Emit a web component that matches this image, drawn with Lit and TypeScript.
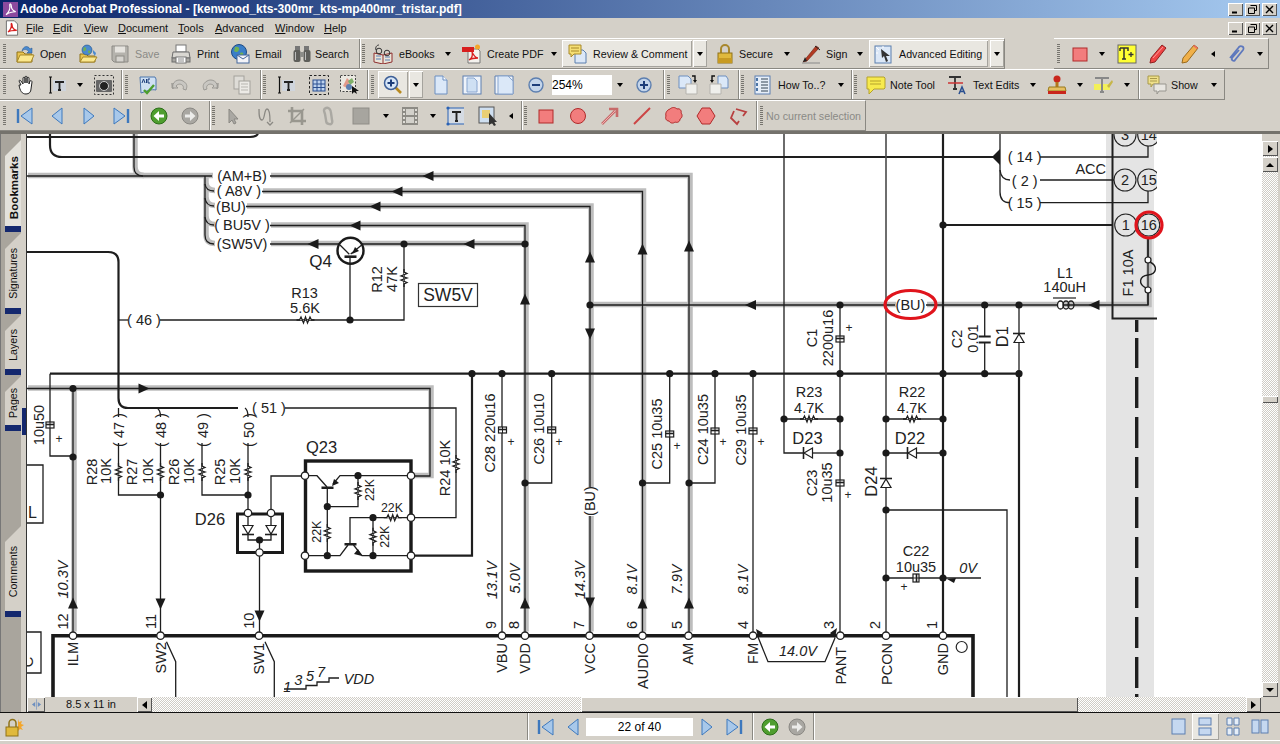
import { LitElement, html, css, svg } from "lit";
import { customElement } from "lit/decorators.js";

// icons, all drawn in a 20x20 box
const I: Record<string, any> = {
  pdf: svg`<path d="M3 1h10l4 4v14H3z" fill="#fff" stroke="#555"/><path d="M5 15c3-2 5-7 4-10 0-1 1-1 1 1 0 4 3 7 6 7-3 0-8 0-11 2z" fill="none" stroke="#d81e1e" stroke-width="1.6"/>`,
  open: svg`<path d="M2 8h6l2 2h7v8H2z" fill="#e9c44f" stroke="#8f7218"/><path d="M2 18l3-7h14l-3 7z" fill="#fbe88e" stroke="#a8892a"/><path d="M7 7c1-5 6-6 8-2l2-1v5h-5l1.5-1.5C12 5 9 5 7 7z" fill="#4a8ad0" stroke="#1c4f8a" stroke-width=".5"/>`,
  open2: svg`<path d="M2 10h6l2 2h7v6H2z" fill="#e9c44f" stroke="#8f7218"/><path d="M2 18l3-5h14l-3 5z" fill="#fbe88e" stroke="#a8892a"/><circle cx="9" cy="6" r="5" fill="#4a8ad0" stroke="#1c4f8a" stroke-width=".6"/><path d="M6 3c2 0 3 2 2 3S6 8 5 6zM10 7c2-1 3 0 2 2-1 1-2 0-2-2z" fill="#6fae55"/><path d="M15 6l3 3-1 3-2-3z" fill="#4a8ad0"/>`,
  save: svg`<path d="M2 2h16v16H4l-2-2z" fill="#b5b3ad" stroke="#8d8b86"/><rect x="5" y="2.5" width="10" height="6" fill="#e6e4df"/><rect x="6" y="12" width="8" height="6" fill="#d6d4cf" stroke="#8d8b86"/>`,
  print: svg`<rect x="5" y="1" width="10" height="7" fill="#fff" stroke="#777"/><path d="M2 8h16l1 6H1z" fill="#d9d7d2" stroke="#6d6d6d"/><rect x="1" y="14" width="18" height="4" fill="#a9a7a2" stroke="#6d6d6d"/><rect x="5" y="13" width="10" height="6" fill="#fff" stroke="#777"/><path d="M7 15h6M7 17h6" stroke="#888"/>`,
  email: svg`<circle cx="9" cy="8" r="7.5" fill="#3a7ec8" stroke="#1c4a85"/><path d="M5 3c3-1 5 1 4 3S6 9 4 7zM10 9c3-1 4 0 3 2-1 1-3 1-3-2z" fill="#6fb055"/><rect x="7" y="11" width="12" height="8" fill="#f3f3f8" stroke="#46689c"/><path d="M7 11l6 4 6-4" fill="none" stroke="#46689c"/>`,
  search: svg`<rect x="3" y="2" width="5" height="5" fill="#777"/><rect x="12" y="2" width="5" height="5" fill="#777"/><rect x="1.5" y="6" width="7" height="12" rx="2" fill="#5e5e5a"/><rect x="11.5" y="6" width="7" height="12" rx="2" fill="#5e5e5a"/><rect x="8" y="8" width="4" height="5" fill="#8c8c88"/><path d="M3.5 8v8M13.5 8v8" stroke="#bbb"/>`,
  ebooks: svg`<path d="M1 9l9 2 9-2v9l-9 2-9-2z" fill="#e9e4d8" stroke="#8f2f2f"/><path d="M10 11v9" stroke="#8f2f2f"/><path d="M3 12h5M3 15h5M12 13h5M12 16h5" stroke="#5a7fb5"/><circle cx="6" cy="7" r="2.8" fill="none" stroke="#333"/><circle cx="14" cy="9" r="2.8" fill="none" stroke="#333"/><path d="M3 6C2 3 4 1 6 1" fill="none" stroke="#333"/>`,
  create: svg`<path d="M6 5h10l2 2v12H6z" fill="#f4f2ee" stroke="#777"/><rect x="0" y="3" width="12" height="5" fill="#d81e1e"/><path d="M7 16c3-2 4-5 3-8 2 4 4 6 6 6-3 0-6 0-9 2z" fill="none" stroke="#d81e1e" stroke-width="1.3"/><circle cx="15.5" cy="3" r="2.5" fill="#f4a62a"/>`,
  review: svg`<path d="M7 6h8l3 3v10H7z" fill="#dce8f7" stroke="#5b7fae"/><path d="M1 1h12v9H6l-3 3v-3H1z" fill="#f5df74" stroke="#a8892a"/><path d="M3 4h8M3 7h8" stroke="#a8892a"/>`,
  lock: svg`<path d="M6 9V5a4 4 0 0 1 8 0v4" fill="none" stroke="#a8872c" stroke-width="2"/><rect x="3" y="9" width="14" height="10" fill="#e0b93c" stroke="#8f7218"/><rect x="3" y="14" width="14" height="5" fill="#c79a22"/>`,
  sign: svg`<path d="M2 18L15 2l3 2L6 17z" fill="#b33a22" stroke="#6d1f10" stroke-width=".6"/><path d="M2 18l2-5 2 4z" fill="#222"/><path d="M1 19h18" stroke="#888"/><path d="M14 2l5 4" stroke="#222"/>`,
  adv: svg`<rect x="2" y="2" width="16" height="17" fill="#dce8f7" stroke="#5b7fae"/><path d="M8 5l1 9 2-2 2 6 2-1-2-5h4z" fill="#333"/><path d="M3 3l3 3M10 2v2M3 9h2" stroke="#fff"/>`,
  rect: svg`<rect x="3" y="4" width="14" height="13" fill="#f27d7d" stroke="#b02a2a"/>`,
  tplus: svg`<rect x="1" y="1" width="18" height="18" fill="#ffff33" stroke="#666"/><path d="M3 4h8v3M7 4v11M5 15h4M3 7V4" fill="none" stroke="#333" stroke-width="1.5"/><path d="M14 8v5M11.5 10.5h5" stroke="#333" stroke-width="1.3"/>`,
  pen: svg`<path d="M3 14L14 1l4 3L7 18l-5 1z" fill="#e44" stroke="#8f2020"/><path d="M5 14l10-11" stroke="#f99"/>`,
  pen2: svg`<path d="M3 14L14 1l4 3L7 18l-5 1z" fill="#f0b04a" stroke="#9a6a1c"/><path d="M13 2l4 3 1-1-4-3z" fill="#e66"/>`,
  clip: svg`<path d="M3 14L12 3c2-2 6 0 4 3L8 16c-1 2-4 0-3-2l7-8" fill="none" stroke="#5e78bd" stroke-width="1.8"/>`,
  hand: svg`<path d="M5 10L3 6c0-1 1-1 2 0l2 3V3c0-1 2-1 2 0v5V2c0-1 2-1 2 0v6V3c0-1 2-1 2 0v6l1-3c1-1 2 0 2 1l-1 7c0 3-2 5-5 5-4 0-6-3-7-9z" fill="#fff" stroke="#222"/>`,
  selT: svg`<path d="M1 2h3M1 18h3M2.5 2v16" stroke="#111" stroke-width="1.2"/><rect x="5" y="5" width="13" height="11" fill="#cfd5dd"/><path d="M7 7h9M11.5 7v8M10 15h3" stroke="#222" stroke-width="1.8" fill="none"/>`,
  cam: svg`<rect x=".5" y=".5" width="19" height="19" fill="none" stroke="#333" stroke-dasharray="2 2"/><rect x="2" y="5" width="16" height="12" rx="1" fill="#666"/><circle cx="10" cy="11" r="4.5" fill="#222" stroke="#ccc"/>`,
  abc: svg`<path d="M2 2h15l1 2v11c-5-1-9 1-15 3z" fill="#cfe0f3" stroke="#4d76ad"/><path d="M6 15l3 3 7-8" fill="none" stroke="#4d9e2e" stroke-width="2.4"/><path d="M4 8l1.5-4L7 8M8.5 4v4M12 4h-2v4h2" fill="none" stroke="#1c3d7a"/>`,
  undo: svg`<path d="M4 14C2 7 9 3 14 6s4 6 3 9l-3-1c2-4-4-7-7-3l2 2H3V8z" fill="#c9c7c2" stroke="#9c9a95"/>`,
  redo: svg`<path d="M16 14C18 7 11 3 6 6s-4 6-3 9l3-1c-2-4 4-7 7-3l-2 2h6V8z" fill="#c9c7c2" stroke="#9c9a95"/>`,
  copy: svg`<rect x="2" y="1" width="10" height="13" fill="#dedcd7" stroke="#a3a19c"/><rect x="7" y="6" width="11" height="13" fill="#eceae6" stroke="#a3a19c"/><path d="M9 9h7M9 12h7M9 15h7" stroke="#b7b5b0"/>`,
  table: svg`<rect x=".5" y=".5" width="19" height="19" fill="none" stroke="#222" stroke-dasharray="2.5 2"/><rect x="4" y="5" width="12" height="11" fill="#bcd2ee" stroke="#2a4f90"/><path d="M4 9h12M4 12.5h12M8 5v11M12 5v11" stroke="#2a4f90"/>`,
  imgsel: svg`<rect x=".5" y=".5" width="15" height="16" fill="#ece9e2" stroke="#444" stroke-dasharray="2 1.5"/><path d="M3 11l4-8 3 3-3 7z" fill="#e39a8a"/><path d="M8 6l4-3 2 4-4 3z" fill="#7fb06a"/><circle cx="9" cy="12" r="3" fill="#5d7fb0"/><path d="M12 11v8l2-2 3 2-1-3h3z" fill="#111"/>`,
  zoom: svg`<path d="M11 11l7 7" stroke="#b88a20" stroke-width="2.6"/><circle cx="8" cy="8" r="6.5" fill="#d7e6f7" stroke="#3d5f97" stroke-width="1.5"/><path d="M4.5 8h7M8 4.5v7" stroke="#1c3d7a" stroke-width="2"/>`,
  page: svg`<path d="M4 1h8l4 4v14H4z" fill="#dbe8f8" stroke="#6d8fc0"/><path d="M12 1v4h4" fill="#fff" stroke="#6d8fc0"/>`,
  page2: svg`<rect x="1" y="1" width="18" height="18" fill="#eef3fa" stroke="#5d7fb0"/><path d="M5 3h7l3 3v11H5z" fill="#cfe0f3" stroke="#8aa6cf"/>`,
  page3: svg`<path d="M1 1h18v18H1z" fill="#eef3fa" stroke="#5d7fb0"/><path d="M4 1h10l5 5v13H4z" fill="#dbe8f8" stroke="#8aa6cf"/>`,
  minus: svg`<circle cx="10" cy="10" r="7" fill="#c3d4ea" stroke="#5d7fb0" stroke-width="1.4"/><path d="M6 10h8" stroke="#1c3d7a" stroke-width="2"/>`,
  plus: svg`<circle cx="10" cy="10" r="7" fill="#c3d4ea" stroke="#5d7fb0" stroke-width="1.4"/><path d="M6 10h8M10 6v8" stroke="#1c3d7a" stroke-width="2"/>`,
  rot1: svg`<path d="M1 1h9l3 3v9H1z" fill="#dbe8f8" stroke="#6d8fc0"/><path d="M8 9h11v10H8z" fill="#efefec" stroke="#b5b3ae"/><path d="M14 1h3v5" fill="none" stroke="#111" stroke-width="1.4"/><path d="M15 5l2 3 2-3z" fill="#111"/>`,
  rot2: svg`<path d="M9 1h8l2 3v9H9z" fill="#dbe8f8" stroke="#6d8fc0"/><path d="M1 9h11v10H1z" fill="#efefec" stroke="#b5b3ae"/><path d="M6 1H3v5" fill="none" stroke="#111" stroke-width="1.4"/><path d="M1 5l2 3 2-3z" fill="#111"/>`,
  howto: svg`<rect x="2" y="1" width="15" height="18" fill="#e6eef8" stroke="#5d7fb0"/><path d="M8 4h7M8 7h7M8 10h7M8 13h7M8 16h7" stroke="#345"/><path d="M4 3v3M4 8v3M4 13v3" stroke="#1c4f8a" stroke-width="1.5"/>`,
  note: svg`<path d="M1 2h17l1 1v10l-1 1H8l-5 5v-5H1z" fill="#f7ea4d" stroke="#b5a22c"/><path d="M4 6h11M4 9h11" stroke="#b5a22c"/>`,
  edits: svg`<path d="M1 2h12M7 2v12M5 14h4" stroke="#333" stroke-width="1.8" fill="none"/><path d="M0 8h15" stroke="#c33" stroke-width="1.5"/><path d="M11 19l3-7 3 7M12.5 16.5h3" stroke="#2a4f90" stroke-width="1.5" fill="none"/>`,
  stamp: svg`<circle cx="10" cy="4" r="3.5" fill="#c9261c"/><rect x="8.5" y="7" width="3" height="5" fill="#b3761c"/><path d="M2 12h16l1 4H1z" fill="#e6bf62" stroke="#9a7b1c"/><rect x="1" y="16" width="18" height="3" fill="#c9261c"/>`,
  hilite: svg`<rect x="0" y="9" width="16" height="6" fill="#f3f05a"/><path d="M1 3h14M8 3v14M6 17h4" stroke="#888" stroke-width="2" fill="none"/><path d="M13 11l5-6 1 2-4 6z" fill="#c7b64a"/>`,
  show: svg`<path d="M1 1h11v8H6l-2 3V9H1z" fill="#efe08a" stroke="#a8994a"/><path d="M7 9h12v7h-7l-2 3v-3H7z" fill="#e8e6e1" stroke="#98968f"/><path d="M3 3.5h7M3 6h7" stroke="#a8994a"/>`,
  first: svg`<path d="M3 3v14" stroke="#3d78bd" stroke-width="2.4"/><path d="M17 2v16L6 10z" fill="#a8c8ea" stroke="#3d78bd"/>`,
  prev: svg`<path d="M15 2v16L5 10z" fill="#a8c8ea" stroke="#3d78bd"/>`,
  next: svg`<path d="M5 2v16l10-8z" fill="#a8c8ea" stroke="#3d78bd"/>`,
  last: svg`<path d="M17 3v14" stroke="#3d78bd" stroke-width="2.4"/><path d="M3 2v16l11-8z" fill="#a8c8ea" stroke="#3d78bd"/>`,
  back: svg`<circle cx="10" cy="10" r="8" fill="#4f9e2f" stroke="#2c6e1a"/><path d="M15 8.5h-5V5l-5.5 5 5.5 5v-3.5h5z" fill="#fff"/>`,
  fwd: svg`<circle cx="10" cy="10" r="8" fill="#a9a7a2" stroke="#8a8883"/><path d="M5 8.5h5V5l5.5 5-5.500 5v-3.5H5z" fill="#ececea"/>`,
  sel: svg`<path d="M5 3v14l3-3 2 4 2-1-2-4h4z" fill="#aaa8a3" stroke="#8a8883"/>`,
  tool: svg`<path d="M3 3c0 5 0 11 3 11s2-11 5-11 3 8 3 13M11 16l3 3 3-3" fill="none" stroke="#8a8883" stroke-width="1.3"/>`,
  crop: svg`<path d="M5 1v14h14M1 5h14v14" fill="none" stroke="#99978f" stroke-width="2.6"/><path d="M3 17L17 3" stroke="#99978f" stroke-width="1.4"/>`,
  link: svg`<path d="M7 2c3-1 5 2 5 5l1 7c1 3-1 5-3 4-2 0-3-2-3-4L6 8C5 5 4 3 7 2z" fill="none" stroke="#aaa8a2" stroke-width="2.4"/>`,
  square: svg`<rect x="2" y="2" width="16" height="16" fill="#a7a59f" stroke="#8f8d87"/>`,
  film: svg`<rect x="2" y="1" width="16" height="18" fill="#8d8b85"/><rect x="6" y="3" width="8" height="6" fill="#d3d1cb"/><rect x="6" y="11" width="8" height="6" fill="#d3d1cb"/><path d="M4 3v14M16 3v14" stroke="#dedcd6" stroke-width="2" stroke-dasharray="2 2"/>`,
  tframe: svg`<rect x="2" y="2" width="16" height="16" fill="#d5dbe3"/><path d="M2 2v16M2 2h16M2 18h16" stroke="#2a62b5"/><circle cx="2" cy="2" r="1.6" fill="#2a62b5"/><circle cx="2" cy="18" r="1.6" fill="#2a62b5"/><path d="M6 6h9M10.5 6v9M9 15h3" stroke="#222" stroke-width="1.9" fill="none"/>`,
  imgcur: svg`<rect x="1" y="1" width="15" height="16" fill="#cfdff0" stroke="#555"/><rect x="4" y="4" width="8" height="8" fill="#e9cf75"/><path d="M11 7v12l3-2 2 3 2-1-2-3h3z" fill="#333"/>`,
  circle: svg`<circle cx="10" cy="10" r="7.5" fill="#f27d7d" stroke="#b02a2a"/>`,
  arrowr: svg`<path d="M2 18L15 5M9 3h8v8" fill="none" stroke="#c76a6a" stroke-width="2.6"/><path d="M2 18L15 5" stroke="#efb0b0"/>`,
  liner: svg`<path d="M2 18L18 2" stroke="#c44" stroke-width="2"/>`,
  cloud: svg`<path d="M6 3c2-2 5-2 7 0 3-1 5 2 4 4 2 2 1 5-1 6 0 3-3 4-5 3-2 2-5 1-6-1-3 0-4-3-3-5-1-3 1-6 4-7z" fill="#f27d7d" stroke="#b02a2a"/>`,
  hex: svg`<path d="M6 2h8l5 8-5 8H6l-5-8z" fill="#f27d7d" stroke="#b02a2a"/>`,
  poly: svg`<path d="M8 3l10 3-3 4M6 5L3 12l6 6 2-3" fill="none" stroke="#b84040" stroke-width="1.8"/>`,
  lockstar: svg`<path d="M14 2l1 3 3-1-1 3 3 1-3 2 2 3-3-1-2 2z" fill="#f4a62a"/><path d="M5 10V6a3.5 3.5 0 0 1 7 0v4" fill="none" stroke="#8f7218" stroke-width="1.5"/><rect x="2" y="10" width="12" height="9" fill="#e0b93c" stroke="#8f7218"/>`,
  v1: svg`<rect x="3" y="2" width="13" height="15" fill="#c5d8f0" stroke="#5d7fb0"/>`,
  v2: svg`<rect x="4" y="1" width="12" height="7" fill="#c5d8f0" stroke="#5d7fb0"/><rect x="4" y="11" width="12" height="7" fill="#c5d8f0" stroke="#5d7fb0"/>`,
  v3: svg`<path d="M4 1h5v7H4zM11 1h5v7h-5zM4 11h5v7H4zM11 11h5v7h-5z" fill="#e6eef8" stroke="#5d7fb0"/>`,
  v4: svg`<rect x="2" y="3" width="7" height="13" fill="#c5d8f0" stroke="#5d7fb0"/><rect x="11" y="3" width="7" height="13" fill="#c5d8f0" stroke="#5d7fb0"/>`,
};

type Item = { x: number; w: number; c: any };
const ic = (x: number, n: string, w = 20) => ({ x, w, c: html`<svg class="ic" viewBox="0 0 20 20" width=${w} height="20">${I[n]}</svg>` });
const tx = (x: number, t: string, w: number, off = false) => ({ x, w, c: html`<span class="lb ${off ? "off" : ""}">${t}</span>` });
const dn = (x: number) => ({ x: x - 3, w: 7, c: html`<i class="dn"></i>` });
const lf = (x: number) => ({ x: x - 2, w: 5, c: html`<i class="lf"></i>` });
const sep = (x: number) => ({ x, w: 2, c: html`<i class="sep"></i>` });
const grip = (x: number) => ({ x, w: 3, c: html`<i class="grip"></i>` });
const box = (x: number, w: number, n: string | null, t = "", sx = 4, tw = 0) => ({
  x, w,
  c: html`<span class="sel" style="padding-left:${sx}px">${n ? html`<svg class="ic" viewBox="0 0 20 20" width="20" height="20">${I[n]}</svg>` : ""}${t ? html`<span class="lb" style="margin-left:${tw}px">${t}</span>` : ""}</span>`,
});
const ddbox = (x: number, w: number) => ({ x, w, c: html`<span class="sel dd"><i class="dn"></i></span>` });

// places the items left to right; the gaps come from the x values
const place = (items: Item[], start: number) => {
  let at = start;
  return items.map((it) => {
    const gap = it.x - at;
    at = it.x + it.w;
    return html`<span class="cell" style="margin-left:${gap}px;width:${it.w}px">${it.c}</span>`;
  });
};

const row1a: Item[] = [grip(3), ic(15, "open"), tx(40, "Open", 26), ic(78, "open2"), ic(110, "save"), tx(135, "Save", 25, true), ic(171, "print"), tx(197, "Print", 22), ic(230, "email"), tx(255, "Email", 26), ic(292, "search"), tx(315, "Search", 36), sep(359), grip(362), ic(373, "ebooks"), tx(399, "eBooks", 36), dn(448), ic(462, "create"), tx(487, "Create PDF", 54), dn(554), box(562, 130, "review", "Review & Comment", 6, 5), ddbox(693, 14), ic(715, "lock"), tx(739, "Secure", 36), dn(787), ic(801, "sign"), tx(826, "Sign", 22), dn(860), box(869, 119, "adv", "Advanced Editing", 4, 6), ddbox(990, 14)];
const row1b: Item[] = [grip(1057), ic(1070, "rect"), dn(1102), ic(1117, "tplus"), ic(1148, "pen"), ic(1180, "pen2"), lf(1213), ic(1227, "clip"), dn(1260)];
const row2: Item[] = [grip(3), ic(16, "hand"), ic(48, "selT"), dn(80), ic(94, "cam"), sep(121), grip(125), ic(138, "abc"), ic(169, "undo"), ic(201, "redo"), ic(232, "copy"), sep(260), grip(263), ic(277, "selT"), ic(309, "table"), ic(340, "imgsel"), sep(367), grip(371), box(378, 30, "zoom", "", 5), ddbox(409, 14), ic(431, "page"), ic(462, "page2"), ic(494, "page3"), ic(526, "minus"), { x: 552, w: 60, c: html`<span class="field">254%</span>` }, dn(620), ic(634, "plus"), sep(663), grip(667), ic(678, "rot1"), ic(709, "rot2"), sep(738), grip(741), ic(753, "howto"), tx(778, "How To..?", 50), dn(841), sep(851), grip(854), ic(866, "note"), tx(890, "Note Tool", 46), ic(948, "edits"), tx(973, "Text Edits", 48), dn(1033), ic(1047, "stamp"), dn(1080), ic(1094, "hilite"), dn(1127), sep(1138), ic(1147, "show"), tx(1171, "Show", 30), dn(1214)];
const row3: Item[] = [grip(3), ic(15, "first"), ic(47, "prev"), ic(79, "next"), ic(111, "last"), sep(140), ic(149, "back"), ic(180, "fwd"), sep(209), grip(212), ic(224, "sel"), ic(256, "tool"), ic(287, "crop"), ic(319, "link"), ic(351, "square"), dn(386), ic(400, "film"), dn(433), ic(446, "tframe"), ic(478, "imgcur"), lf(511), sep(521), grip(524), ic(536, "rect"), ic(568, "circle"), ic(600, "arrowr"), ic(632, "liner"), ic(664, "cloud"), ic(696, "hex"), ic(728, "poly"), sep(756), grip(760), tx(766, "No current selection", 96, true)];
const statusItems: Item[] = [ic(4, "lockstar"), sep(527), ic(536, "first"), ic(563, "prev"), { x: 586, w: 107, c: html`<span class="field mid">22 of 40</span>` }, ic(697, "next"), ic(724, "last"), sep(752), ic(760, "back"), ic(787, "fwd"), sep(813), ic(1169, "v1"), box(1192, 27, "v2", "", 3), ic(1223, "v3"), ic(1250, "v4")];

// schematic helpers, everything in page coordinates
const INK = "#1e1e1e";
const vt = (x: number, y: number, t: string, size = 14.5, italic = false) => svg`<text transform="rotate(-90 ${x} ${y})" x=${x} y=${y} text-anchor="middle" font-size=${size} font-style=${italic ? "italic" : "normal"}>${t}</text>`;
const pinName = (x: number, y: number, t: string) => svg`<text transform="rotate(-90 ${x} ${y})" x=${x} y=${y} text-anchor="end" font-size="14.5">${t}</text>`;
const ht = (x: number, y: number, t: string, size = 14.5, italic = false) => svg`<text x=${x} y=${y} text-anchor="middle" font-size=${size} font-style=${italic ? "italic" : "normal"}>${t}</text>`;
const bus = (d: string) => svg`<path d=${d} transform="translate(1 -.5)" fill="none" stroke="#bdbdbd" stroke-width="5.5"/>`;
const wire = (d: string, w = 1.3, c = INK) => svg`<path d=${d} fill="none" stroke=${c} stroke-width=${w}/>`;
const dot = (x: number, y: number) => svg`<circle cx=${x} cy=${y} r="3.6" fill="#1a1a1a"/>`;
const pin = (x: number, y: number) => svg`<circle cx=${x} cy=${y} r="3.7" fill="#fff" stroke="#222" stroke-width="1.3"/>`;
const tri = (x: number, y: number, a: number) => svg`<path d="M-5.5 0L5.5 -5L5.5 5z" transform="translate(${x} ${y}) rotate(${a})" fill="#1a1a1a"/>`;
const resH = (x: number, y: number) => svg`<g transform="translate(${x} ${y})"><path d="M-9 0H-6L-4.5 -3L-2 3L0 -3L2 3L4.5 -3L6 0H9" fill="#fff" stroke=${INK} stroke-width="1.3"/></g>`;
const resV = (x: number, y: number) => svg`<g transform="translate(${x} ${y}) rotate(90)"><path d="M-9 0H-6L-4.5 -3L-2 3L0 -3L2 3L4.5 -3L6 0H9" fill="#fff" stroke=${INK} stroke-width="1.3"/></g>`;
const capP = (x: number, y: number, a = 0) => svg`<g transform="translate(${x} ${y}) rotate(${a})"><rect x="-4" y="-3" width="8" height="6" fill="#fff" stroke=${INK} stroke-width="1.2"/><path d="M-4 -.5H4" stroke=${INK} stroke-width="1.6"/><path d="M0 -3V3" stroke=${INK}/></g>`;
const diode = (x: number, y: number, a: number) => svg`<g transform="translate(${x} ${y}) rotate(${a})"><path d="M-5 4.5H5L0 -4z" fill="#fff" stroke=${INK} stroke-width="1.2"/><path d="M-6 -4.5H6" stroke=${INK} stroke-width="1.6"/></g>`;

const busPaths = [
  "M27 176H212", "M134 134V167Q134 176 143 176", "M205 176V235Q205 244 214 244", "M205 184Q206 191 214 191", "M205 198Q206 206 214 206", "M205 217Q206 225 214 225",
  "M270 176H689V632", "M262 191.5H642.5V632", "M246 206.5H590V632", "M270 225.5H525V632", "M270 244H525",
  "M590 305H895", "M926 305H1148V237", "M27 388.5H430V476H411", "M73 388.5V632",
];
const thick = [
  "M27 137H250Q256 137 258 134", "M50 134V145Q50 157 62 157H998", "M27 252H108Q118.5 252 118.5 262V398Q118.5 408 128 408H238",
  "M50 373.7H1019", "M943 134V632", "M1019 374V697", "M943 225H1113", "M472 373.7V555.7H411",
];
const thin = [
  "M50 373.7V456H73", "M1000 134V192Q1000 202.7 1010 202.7", "M1000 170Q1001 180 1010 180", "M1040 157H1148V146", "M1040 180H1114", "M1040 202.7H1148V191",
  "M784 134V453H803", "M813 453H840", "M784 419H840", "M840 305V632", "M886 419H943", "M886 453H943", "M886 510H1007V697", "M886 578H981",
  "M118.5 408V417", "M118.5 443V495H160.5", "M160.5 443V632", "M157 408Q160.5 410 160.5 417", "M202 443V495H248", "M248 443V513", "M245 408Q248 410 248 417",
  "M259.5 540V632", "M248 513V540H271V513", "M271 513V476H305",
  "M285 408H456V517.7H411", "M128 320H118.5", "M160 320H350M350 258V320H404V244",
  "M502 373.7V632", "M551.7 373.7V483H525", "M669.7 373.7V483H642.5", "M715 373.7V483H689", "M753 373.7V632",
  "M984.7 305V336.5", "M984.7 342.5V374", "M1019 305V374", "M1148 237V258M1148 292V305",
  "M305 475.7H317L327 487M333 484L340 475.7H411", "M358 475.7V506.7H327.3", "M327.3 488V555.7", "M305 555.7H340L348 545M353.5 545L362 555.7H411",
  "M350 544V517.7H411", "M373 517.7V555.7",
  "M27 465H43V523H27", "M27 632H41V673H27", "M758 637L768 661.7H825L835 638", "M166.5 641.7L175.7 661.7V697", "M265 641.7L274.3 661.7V697",
  "M284 689H306V685.5H317V682H329V678H339",
];
const solid = [[525, 244], [404, 244], [350, 320], [590, 305], [73, 388.5], [73, 457], [840, 305], [984.7, 305], [1019, 305], [472, 373.7], [502, 373.7], [551.7, 373.7], [669.7, 373.7], [715, 373.7], [753, 373.7], [840, 373.7], [943, 373.7], [984.7, 373.7], [1019, 373.7], [784, 419], [840, 419], [886, 419], [943, 419], [840, 453], [886, 453], [943, 453], [886, 510], [886, 578], [943, 578], [943, 225], [160.5, 495], [248, 495], [525, 483], [642.5, 483], [689, 483], [259.5, 540], [358, 475.7], [327.3, 506.7], [327.3, 555.7], [373, 517.7], [373, 555.7]];
const hollow = [[73, 635.7], [160.5, 635.7], [259, 635.7], [502, 635.7], [525, 635.7], [589.5, 635.7], [642.5, 635.7], [688.5, 635.7], [753, 635.7], [840.3, 635.7], [886, 635.7], [943, 635.7], [248, 513], [271, 513], [259.5, 552.5], [305, 475.7], [411, 475.7], [411, 517.7], [305, 555.7], [411, 555.7]];
const arrows: [number, number, number][] = [[428, 176, 0], [397, 191.5, 0], [375, 206.5, 0], [355, 225.5, 0], [313, 244, 0], [469, 244, 0], [750.5, 305, 0], [1094, 305, 0], [144, 388.5, 180], [689, 246, 90], [642.5, 249, 90], [590, 257, 90], [525, 299, 90], [73, 603, 90], [525, 603, 90], [642.5, 603, 90], [689, 603, 90], [590, 334, 270], [590, 603, 270], [160.5, 604, 270], [259.5, 616, 270]];
const hLabels: [number, number, string, number?][] = [
  [242, 181, "(AM+B)"], [239, 196, "( A8V )"], [231, 211.5, "(BU)"], [242, 230, "( BU5V )"], [242, 249, "(SW5V)"],
  [320.5, 266.5, "Q4", 17], [304.5, 298, "R13"], [305, 313, "5.6K"], [144, 325, "( 46 )"], [448, 300.5, "SW5V", 17.5], [269, 413, "( 51 )"],
  [809, 397, "R23"], [809, 413, "4.7K"], [912, 397, "R22"], [912, 413, "4.7K"], [807.5, 444, "D23", 16.5], [910, 444, "D22", 16.5],
  [916, 556, "C22"], [916, 571.5, "10u35"], [1090.7, 174, "ACC"], [1065, 278, "L1"], [1064.7, 292, "140uH"],
  [1024.7, 162, "( 14 )"], [1024.7, 185.5, "( 2 )"], [1024.7, 207.5, "( 15 )"], [910.5, 310, "(BU)"],
  [210, 525, "D26", 16.5], [321.5, 453, "Q23", 16.5], [392, 511.5, "22K", 12.4],
];
const vLabels: [number, number, string, number?][] = [
  [382, 279.5, "R12"], [397, 279, "47K"], [44, 425, "10u50"], [97, 472, "R28"], [111, 471, "10K"], [137, 472, "R27"], [153, 471, "10K"], [179, 472, "R26"], [194, 471, "10K"], [225, 472, "R25"], [240, 471, "10K"],
  [124, 430, "( 47 )"], [166, 430, "( 48 )"], [208, 430, "( 49 )"], [254, 430, "( 50 )"], [450, 468, "R24 10K"],
  [495, 433, "C28 220u16"], [544, 429, "C26 10u10"], [662, 434, "C25 10u35"], [708, 429.5, "C24 10u35"], [746, 430, "C29 10u35"],
  [817, 338, "C1"], [833, 338, "2200u16"], [817, 483, "C23"], [832, 482.5, "10u35"], [877, 481.5, "D24", 16.5],
  [962, 339, "C2"], [978, 338.5, "0.01"], [1008, 336.7, "D1", 16.5], [1133, 273, "F1 10A"], [595, 501, "(BU)"],
  [68, 621.5, "12"], [156, 621.5, "11"], [254, 620.7, "10"], [496, 625, "9"], [519, 625, "8"], [584, 625, "7"], [637, 625, "6"], [682, 625, "5"], [748, 625, "4"], [834, 625, "3"], [880, 625, "2"], [937, 625, "1"],
  [374, 490, "22K", 12.4], [321, 531.7, "22K", 12.4], [389, 536.7, "22K", 12.4], [33, 662, "C"],
];
const pinNames: [number, number, string][] = [[78, 642, "ILM"], [166, 642, "SW2"], [264, 643, "SW1"], [507, 643, "VBU"], [530, 643, "VDD"], [595, 643, "VCC"], [648, 643, "AUDIO"], [693, 643, "AM"], [758, 643, "FM"], [846, 647, "PANT"], [892, 643, "PCON"], [948, 643, "GND"]];
const volts: [number, number, string][] = [[68, 579.5, "10.3V"], [497, 580, "13.1V"], [520, 578.5, "5.0V"], [585, 580, "14.3V"], [637, 579.5, "8.1V"], [682, 579.5, "7.9V"], [748, 579.5, "8.1V"]];
const circles: [number, number, string][] = [[1125, 135, "3"], [1148.7, 135, "14"], [1125, 180, "2"], [1148.7, 180, "15"], [1125.7, 225, "1"], [1148.7, 225, "16"]];

const schematic = () => svg`
  <rect x="1106" y="134" width="48" height="563" fill="#e4e4e4"/>
  ${busPaths.map(bus)}
  ${thick.map((d) => wire(d, 2.2))}
  ${busPaths.map((d) => wire(d, 1.3))}
  ${wire("M886 134V632", 1.6, "#4a4a4a")}
  ${thin.map((d) => wire(d))}
  <path d="M992 157L1000 149V165z" fill="#1a1a1a"/>
  <rect x="582" y="487" width="15" height="29" fill="#fff"/>
  ${wire("M53 697V635.7H973V697", 3.6, "#1a1a1a")}
  ${wire("M1112.5 134V318.6H1157", 2)}
  ${wire("M1136.7 320V332M1136.7 338V368M1136.7 377V408M1136.7 417V448M1136.7 457V488M1136.7 497V528M1136.7 537V568M1136.7 577V608M1136.7 617V648M1136.7 657V688M1136.7 694V697", 3.4)}
  ${arrows.map((a) => tri(a[0], a[1], a[2]))}

  <circle cx="350.5" cy="250.7" r="13" fill="#fff" stroke="#1a1a1a" stroke-width="2.4"/>
  ${wire("M340 245L349.3 254.3M350.7 254L361.7 245M350 258V264")}
  ${wire("M344.5 256.7H356.5", 2.6)}
  <path d="M352 254l3-7 4 4z" fill="#1a1a1a"/>
  ${wire("M321.5 487.7H333.5M344.5 544.3H356.5", 2.6)}
  <path d="M332 486l2-7 5 4zM362 556l-8-2 4-5z" fill="#1a1a1a"/>

  <rect x="418.5" y="283.5" width="59" height="23" fill="none" stroke="#333" stroke-width="1.2"/>
  <rect x="237.5" y="514" width="45" height="38.5" fill="none" stroke="#1a1a1a" stroke-width="3"/>
  <rect x="305.5" y="461" width="105.5" height="110" fill="none" stroke="#1a1a1a" stroke-width="3.4"/>

  ${resH(305.5, 320)} ${resV(404, 278)} ${resV(118.5, 472)} ${resV(160.5, 472)} ${resV(202, 472)} ${resV(248, 472)} ${resV(456, 464)}
  ${resH(809, 419)} ${resH(912, 419)} ${resV(358, 491)} ${resV(327.3, 533)} ${resH(392.7, 517.7)} ${resV(373, 536.7)}
  ${capP(50, 425)} ${capP(502.5, 430)} ${capP(551.7, 430)} ${capP(669.7, 434)} ${capP(715, 431)} ${capP(753, 431)} ${capP(840, 339)} ${capP(840, 483)} ${capP(916, 578, 90)}
  ${diode(1019, 338, 0)} ${diode(886, 483, 0)} ${diode(808, 453, -90)} ${diode(912, 453, -90)} ${diode(248, 530, 180)} ${diode(271, 530, 180)}
  ${wire("M978.7 336.5H990.7M978.7 342.5H990.7", 1.8)}
  <path d="M1053 298H1076" stroke=${INK} stroke-width="1.2"/>
  <ellipse cx="1060.5" cy="305" rx="3" ry="4" fill="#fff" stroke=${INK} stroke-width="1.3"/>
  <ellipse cx="1066" cy="305" rx="3" ry="4" fill="none" stroke=${INK} stroke-width="1.3"/>
  <ellipse cx="1071" cy="305" rx="3" ry="4" fill="none" stroke=${INK} stroke-width="1.3"/>
  <path d="M1150 262C1158 266 1157 274 1148 275C1139 276 1138 284 1146 288" fill="none" stroke=${INK} stroke-width="1.4"/>
  <circle cx="1148" cy="260" r="3" fill="#fff" stroke=${INK} stroke-width="1.2"/>
  <circle cx="1148" cy="290" r="3" fill="#fff" stroke=${INK} stroke-width="1.2"/>
  <circle cx="961.7" cy="647" r="5.5" fill="none" stroke="#222" stroke-width="1.2"/>
  <path d="M758 637l-2-8 7 4zM835 638l-5-5 7-5z" fill="#1a1a1a"/>
  <path d="M947 579l9-1-2 5z" fill="#1a1a1a"/>

  ${solid.map((p) => dot(p[0], p[1]))}
  ${hollow.map((p) => pin(p[0], p[1]))}
  ${circles.map((c) => svg`<circle cx=${c[0]} cy=${c[1]} r="11" fill="#e4e4e4" stroke="#222" stroke-width="1.1"/>${ht(c[0], c[1] + 5, c[2])}`)}
  <rect x="1157" y="134" width="6" height="80" fill="#fff"/>

  ${hLabels.map((l) => ht(l[0], l[1], l[2], l[3]))}
  ${vLabels.map((l) => vt(l[0], l[1], l[2], l[3]))}
  ${pinNames.map((l) => pinName(l[0], l[1], l[2]))}
  ${volts.map((l) => vt(l[0], l[1], l[2], 14.5, true))}
  ${ht(798, 656, "14.0V", 14.5, true)} ${ht(968, 573, "0V", 14.5, true)} ${ht(359, 684, "VDD", 14.5, true)}
  ${ht(287.3, 692, "1", 14.5, true)} ${ht(298.3, 685, "3", 14.5, true)} ${ht(310, 681, "5", 14.5, true)} ${ht(321, 677, "7", 14.5, true)}
  <text x="28" y="518" font-size="16">L</text>
  ${[[59, 443], [511, 446], [559, 446], [677, 450], [723, 446], [761, 446], [849, 332], [848, 499], [904, 591]].map((p) => ht(p[0], p[1], "+", 12))}

  <ellipse cx="910.5" cy="304.5" rx="25.5" ry="14" fill="none" stroke="#e0141c" stroke-width="3.2"/>
  <circle cx="1149" cy="225" r="13" fill="none" stroke="#e0141c" stroke-width="3.2"/>
`;

const tabs = [
  { t: "Bookmarks", h: 92, top: 6, on: true },
  { t: "Signatures", h: 81, top: 1, on: false },
  { t: "Layers", h: 60, top: 1, on: false },
  { t: "Pages", h: 55, top: 1, on: false },
  { t: "Comments", h: 91, top: 95, on: false },
];

@customElement("app-root")
export class AppRoot extends LitElement {
  static styles = css`
    :host {
      display: block;
      width: 1280px;
      height: 744px;
      overflow: hidden;
      background: #d4d0c8;
      font-family: "Liberation Sans", Arial, sans-serif;
      font-size: 10.7px;
      color: #111;
    }
    .title {
      height: 18px;
      display: flex;
      align-items: center;
      background: linear-gradient(90deg, #0a246a, #a6caf0);
      color: #fff;
      font-weight: bold;
      font-size: 12.1px;
    }
    .title svg {
      margin: 0 2px 0 3px;
      flex: none;
    }
    .wbtns {
      margin-left: auto;
      display: flex;
      gap: 2px;
      padding-right: 3px;
    }
    .wb {
      width: 15px;
      height: 13px;
      background: #d4d0c8;
      box-shadow: inset 1px 1px #fff, inset -1px -1px #555;
      color: #000;
      display: flex;
      align-items: center;
      justify-content: center;
    }
    .wb svg {
      margin: 0;
    }
    .menu {
      height: 20px;
      display: flex;
      align-items: center;
      font-size: 11px;
    }
    .menu > svg {
      margin-left: 4px;
      flex: none;
    }
    .menu .m {
      display: block;
      white-space: nowrap;
    }
    .row {
      height: 31px;
      display: flex;
      box-sizing: border-box;
    }
    .tb {
      height: 31px;
      box-sizing: border-box;
      display: flex;
      align-items: center;
      border-top: 1px solid #fff;
      border-bottom: 1px solid #8a8882;
      border-right: 1px solid #8a8882;
      flex: none;
    }
    .cell {
      flex: none;
      display: flex;
      align-items: center;
      height: 100%;
    }
    .ic {
      display: block;
      flex: none;
    }
    .lb {
      white-space: nowrap;
    }
    .off {
      color: #8a8a86;
    }
    .dn {
      display: block;
      border: 3.5px solid transparent;
      border-top: 4px solid #000;
      border-bottom: 0;
    }
    .lf {
      display: block;
      border: 3.5px solid transparent;
      border-right: 4px solid #000;
      border-left: 0;
    }
    .sep {
      display: block;
      width: 1px;
      height: 100%;
      background: #8a8882;
      border-right: 1px solid #fff;
    }
    .grip {
      display: block;
      width: 3px;
      height: 20px;
      background: repeating-linear-gradient(180deg, #77756f 0 1px, #d4d0c8 1px 2px);
    }
    .sel {
      display: flex;
      align-items: center;
      width: 100%;
      height: 27px;
      box-sizing: border-box;
      background: #e9e7e1;
      box-shadow: inset 1px 1px #fff, inset -1px -1px #a5a39d;
    }
    .dd {
      justify-content: center;
      padding: 0;
    }
    .field {
      display: block;
      width: 100%;
      height: 20px;
      line-height: 20px;
      background: #fff;
      font-size: 12px;
      color: #000;
    }
    .mid {
      text-align: center;
      height: 18px;
      line-height: 18px;
    }
    .band {
      height: 3px;
      background: #74726c;
    }
    .main {
      display: flex;
      height: 578px;
    }
    .nav {
      width: 26px;
      flex: none;
      box-sizing: border-box;
      background: #a9a59d;
      border-left: 1px solid #777;
      border-right: 5px solid #d4d0c8;
      position: relative;
    }
    .tabs {
      display: flex;
      flex-direction: column;
      padding-left: 4px;
    }
    .tab {
      width: 16px;
      box-sizing: border-box;
      background: #d4d0c8;
      clip-path: polygon(0 16px, 16px 0, 16px 100%, 0 100%);
      border-bottom: 6px solid #14286e;
      display: flex;
      align-items: center;
      justify-content: center;
      padding-top: 6px;
    }
    .tab.on {
      background: #e4e2dc;
      font-weight: bold;
      padding-top: 10px;
    }
    .tab span {
      writing-mode: vertical-rl;
      transform: rotate(180deg);
      font-size: 10.6px;
      white-space: nowrap;
    }
    .tab.on span {
      font-size: 11.6px;
    }
    .navmark {
      position: absolute;
      right: -5px;
      top: 274px;
      width: 4px;
      height: 27px;
      background: #14286e;
    }
    .doc {
      flex: 1;
      display: flex;
      flex-direction: column;
      border-left: 1px solid #333;
      min-width: 0;
    }
    .pagerow {
      display: flex;
      height: 563px;
    }
    .canvas {
      display: block;
      flex: none;
      background: #fff;
      font-family: "Liberation Sans", Arial, sans-serif;
    }
    .canvas text {
      fill: #222;
    }
    .vs {
      width: 16px;
      flex: none;
      display: flex;
      flex-direction: column;
      background: repeating-conic-gradient(#cfccc5 0 25%, #fff 0 50%) 0 0 / 2px 2px;
    }
    .gap7 {
      height: 7px;
      background: #d4d0c8;
    }
    .sb {
      height: 15px;
      flex: none;
      background: #d4d0c8;
      box-shadow: inset 1px 1px #fff, inset -1px -1px #555;
      display: flex;
      align-items: center;
      justify-content: center;
      box-sizing: border-box;
    }
    .sb + .sb {
      margin-top: 1px;
    }
    .thumbv {
      height: 7px;
      margin-top: 224px;
      background: #d4d0c8;
      box-shadow: inset 1px 1px #fff, inset -1px -1px #555;
    }
    .up {
      border: 4px solid transparent;
      border-bottom: 4px solid #000;
      border-top: 0;
    }
    .down {
      border: 4px solid transparent;
      border-top: 4px solid #000;
      border-bottom: 0;
    }
    .right {
      border: 4px solid transparent;
      border-left: 5px solid #000;
      border-right: 0;
    }
    .left {
      border: 4px solid transparent;
      border-right: 5px solid #000;
      border-left: 0;
    }
    .spacer {
      flex: 1;
    }
    .hs {
      height: 15px;
      display: flex;
      background: repeating-conic-gradient(#cfccc5 0 25%, #fff 0 50%) 0 0 / 2px 2px;
    }
    .hs > * {
      flex: none;
    }
    .hs .spacer {
      flex: 1;
    }
    .hs .sb {
      width: 15px;
    }
    .hs .sb + .sb {
      margin-top: 0;
    }
    .hs .first {
      width: 18px;
    }
    .size {
      width: 92px;
      background: #d4d0c8;
      font-size: 11px;
      text-align: center;
      line-height: 15px;
    }
    .thumbh {
      width: 497px;
      margin-left: 429px;
      background: #d4d0c8;
      box-shadow: inset 1px 1px #fff, inset -1px -1px #555;
    }
    .corner {
      width: 19px;
      background: #d4d0c8;
    }
    .status {
      height: 27px;
      display: flex;
      align-items: center;
      border-top: 1px solid #111;
      box-sizing: content-box;
    }
    .foot {
      height: 3px;
      border-top: 1px solid #fff;
    }
  `;

  render() {
    return html`
      <div class="title">
        <svg viewBox="0 0 20 20" width="15" height="15"><rect width="20" height="20" fill="#8c4a9e"/><path d="M4 17c4-3 6-9 5-13 0-2 2-2 2 1 0 4 3 7 6 8-4 0-9 1-13 4z" fill="none" stroke="#fff" stroke-width="1.6"/></svg>
        <span>Adobe Acrobat Professional - [kenwood_kts-300mr_kts-mp400mr_tristar.pdf]</span>
        ${this.winButtons()}
      </div>
      <div class="menu">
        <svg viewBox="0 0 20 20" width="16" height="18">${I.pdf}</svg>
        ${[["F", "ile", 6, 15], ["E", "dit", 12, 18], ["V", "iew", 13, 21], ["D", "ocument", 13, 47], ["T", "ools", 13, 24], ["A", "dvanced", 13, 47], ["W", "indow", 13, 37], ["H", "elp", 12, 21]].map(
          (m) => html`<span class="m" style="margin-left:${m[2]}px;width:${m[3]}px"><u>${m[0]}</u>${m[1]}</span>`
        )}
        ${this.winButtons()}
      </div>
      <div class="row">
        <div class="tb" style="width:1005px">${place(row1a, 0)}</div>
        <div class="tb" style="margin-left:49px;width:215px">${place(row1b, 1054)}</div>
      </div>
      <div class="row"><div class="tb" style="width:1225px">${place(row2, 0)}</div></div>
      <div class="row"><div class="tb" style="width:866px">${place(row3, 0)}</div></div>
      <div class="band"></div>
      <div class="main">
        <div class="nav">
          <div class="tabs">
            ${tabs.map(
              (t) => html`<div class="tab ${t.on ? "on" : ""}" style="height:${t.h}px;margin-top:${t.top}px"><span>${t.t}</span></div>`
            )}
          </div>
          <div class="navmark"></div>
        </div>
        <div class="doc">
          <div class="pagerow">
            <svg class="canvas" viewBox="27 134 1235 563" width="1235" height="563" font-size="14.5">${schematic()}</svg>
            <div class="vs">
              <div class="gap7"></div>
              <div class="sb"><i class="right"></i></div>
              <div class="sb"><i class="up"></i></div>
              <div class="thumbv"></div>
              <div class="spacer"></div>
              <div class="sb"><i class="down"></i></div>
            </div>
          </div>
          <div class="hs">
            <div class="sb first"><svg viewBox="0 0 20 20" width="13" height="13"><path d="M10 2v16" stroke="#6d8fc0"/><path d="M8 6v8l-5-4zM12 6v8l5-4z" fill="#6d8fc0"/></svg></div>
            <div class="size">8.5 x 11 in</div>
            <div class="sb"><i class="left"></i></div>
            <div class="thumbh"></div>
            <div class="spacer"></div>
            <div class="sb"><i class="right"></i></div>
            <div class="corner"></div>
          </div>
        </div>
      </div>
      <div class="status">${place(statusItems, 0)}</div>
      <div class="foot"></div>
    `;
  }

  winButtons() {
    return html`<div class="wbtns">
      <div class="wb"><svg width="9" height="9" viewBox="0 0 9 9"><path d="M1 7.5h5" stroke="#000" stroke-width="2"/></svg></div>
      <div class="wb"><svg width="9" height="9" viewBox="0 0 9 9"><path d="M2.5 .5h6v5h-2M.5 3h6v5.5h-6z" fill="none" stroke="#000"/></svg></div>
      <div class="wb"><svg width="9" height="9" viewBox="0 0 9 9"><path d="M1 1l7 7M8 1L1 8" stroke="#000" stroke-width="1.4"/></svg></div>
    </div>`;
  }
}
